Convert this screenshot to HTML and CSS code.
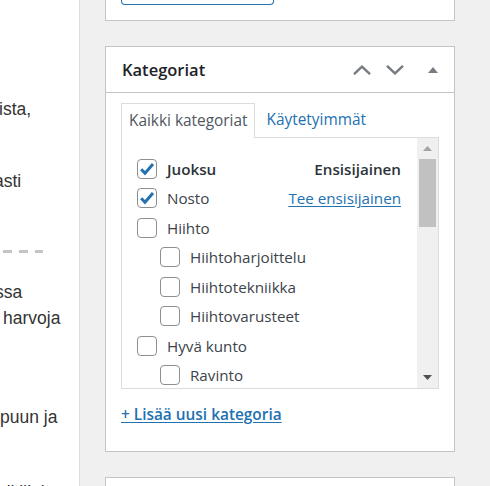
FILE: index.html
```html
<!DOCTYPE html>
<html lang="fi">
<head>
<meta charset="utf-8">
<title>Kategoriat</title>
<link rel="stylesheet" href="styles.css">
</head>
<body>
<div class="page">
  <div class="editor">
    <div class="ed-line l1"><span class="cut c1">ista,</span></div>
    <div class="ed-line l2"><span class="cut c2">asti</span></div>
    <div class="ed-sep"></div>
    <div class="ed-line l3"><span class="cut c3">ssa</span></div>
    <div class="ed-line"><span class="cut c4">harvoja</span></div>
    <div class="ed-line l5"><span class="cut c5">puun ja</span></div>
    <div class="ed-line l6"><span class="cut c6">oli illoi</span></div>
  </div>

  <div class="sidebar">
    <div class="postbox top-box"><div class="btn-outline"></div></div>

    <div class="postbox cat-box">
      <div class="pb-header">
        <h2 class="pb-title">Kategoriat</h2>
        <div class="pb-actions">
          <span class="handle">
            <svg width="18" height="10" viewBox="0 0 18 10"><polyline points="1,9.2 9,1.6 17,9.2" fill="none" stroke="#787c82" stroke-width="2.4"/></svg>
          </span>
          <span class="handle">
            <svg width="18" height="10" viewBox="0 0 18 10"><polyline points="1,0.8 9,8.4 17,0.8" fill="none" stroke="#787c82" stroke-width="2.4"/></svg>
          </span>
          <span class="handle toggle">
            <svg width="10" height="6" viewBox="0 0 10 6"><polygon points="0,6 5,0 10,6" fill="#787c82"/></svg>
          </span>
        </div>
      </div>

      <div class="pb-inside">
        <ul class="tabs">
          <li class="tab active">Kaikki kategoriat</li>
          <li class="tab">Käytetyimmät</li>
        </ul>
        <div class="tabs-panel">
          <ul class="checklist">
            <li>
              <div class="row">
                <span class="cb"><svg width="20" height="20" viewBox="0 0 20 20"><polyline points="4.2,10.2 8,14.2 16,5" fill="none" stroke="#2271b1" stroke-width="3"/></svg></span>
                <span class="name primary">Juoksu</span>
                <span class="prim-tag">Ensisijainen</span>
              </div>
            </li>
            <li>
              <div class="row">
                <span class="cb"><svg width="20" height="20" viewBox="0 0 20 20"><polyline points="4.2,10.2 8,14.2 16,5" fill="none" stroke="#2271b1" stroke-width="3"/></svg></span>
                <span class="name">Nosto</span>
                <span class="prim-link">Tee ensisijainen</span>
              </div>
            </li>
            <li>
              <div class="row"><span class="cb"></span><span class="name">Hiihto</span></div>
              <ul class="children">
                <li><div class="row"><span class="cb"></span><span class="name">Hiihtoharjoittelu</span></div></li>
                <li><div class="row"><span class="cb"></span><span class="name">Hiihtotekniikka</span></div></li>
                <li><div class="row"><span class="cb"></span><span class="name">Hiihtovarusteet</span></div></li>
              </ul>
            </li>
            <li>
              <div class="row"><span class="cb"></span><span class="name">Hyvä kunto</span></div>
              <ul class="children">
                <li><div class="row"><span class="cb"></span><span class="name">Ravinto</span></div></li>
                <li><div class="row"><span class="cb"></span><span class="name">Palautuminen</span></div></li>
              </ul>
            </li>
          </ul>
          <div class="scrollbar">
            <div class="sb-btn"><svg width="9" height="5" viewBox="0 0 9 5"><polygon points="0,5 4.5,0 9,5" fill="#a3a3a3"/></svg></div>
            <div class="sb-thumb"></div>
            <div class="sb-track"></div>
            <div class="sb-btn"><svg width="9" height="5" viewBox="0 0 9 5"><polygon points="0,0 4.5,5 9,0" fill="#505050"/></svg></div>
          </div>
        </div>
        <div class="add-row"><a class="add-new" href="#">+ Lisää uusi kategoria</a></div>
      </div>
    </div>

    <div class="postbox next-box"></div>
  </div>
</div>
</body>
</html>
```
FILE: styles.css
```css
* { box-sizing: border-box; }
html, body { margin: 0; padding: 0; }
body {
  background: #f0f0f1;
  font-family: "Open Sans", "Noto Sans", sans-serif;
  color: #3c434a;
}
.page {
  display: flex;
  height: 486px;
  overflow: hidden;
}

/* left editor column */
.editor {
  flex: none;
  width: 80px;
  background: #fff;
  border-right: 1px solid #dcdcde;
  overflow: hidden;
  font-family: "Liberation Sans", Arial, sans-serif;
  font-size: 17.5px;
  line-height: 26.25px;
  color: #333;
}
.ed-line { white-space: nowrap; height: 26.25px; }
.l1 { margin-top: 96px; }
.l2 { margin-top: 45.75px; }
.l3 { margin-top: 26px; }
.l5 { margin-top: 72.5px; }
.l6 { margin-top: 48.75px; }
.cut { display: inline-block; }
.c1 { margin-left: -1px; }
.c2 { margin-left: -6px; }
.c3 { margin-left: -5px; }
.c4 { margin-left: 3px; }
.c5 { margin-left: 0; }
.c6 { margin-left: -3px; }
.ed-sep {
  margin-top: 55.75px;
  margin-left: 3px;
  width: 40px;
  height: 3px;
  background: repeating-linear-gradient(90deg, #c3c4c7 0 9px, transparent 9px 16px);
}

/* sidebar */
.sidebar {
  flex: none;
  width: 350px;
  margin-left: 25px;
}
.postbox {
  background: #fff;
  border: 1px solid #c3c4c7;
}
.top-box {
  border-top: none;
  height: 21px;
  padding-left: 15px;
}
.btn-outline {
  width: 153px;
  height: 5px;
  border: 1px solid #2271b1;
  border-top: none;
  border-radius: 0 0 4px 4px;
}
.cat-box {
  margin-top: 25px;
}
.pb-header {
  display: flex;
  align-items: center;
  height: 46px;
  border-bottom: 1px solid #c3c4c7;
  padding-left: 16px;
}
.pb-title {
  margin: 0;
  flex: 1;
  font-size: 16.5px;
  font-weight: 600;
  color: #1d2327;
  line-height: 1.4;
}
.pb-actions {
  display: flex;
  height: 100%;
}
.handle {
  width: 33px;
  display: flex;
  align-items: center;
  justify-content: center;
}
.handle.toggle { width: 43px; }

.pb-inside {
  padding: 10px 15px 25px 15px;
}
.tabs {
  list-style: none;
  margin: 0;
  padding: 0;
  display: flex;
  align-items: flex-start;
  height: 34px;
}
.tab {
  height: 35px;
  line-height: 33px;
  padding: 0 12px 0 12px;
  font-size: 15.4px;
  color: #2271b1;
}
.tab.active {
  position: relative;
  z-index: 1;
  background: #fff;
  border: 1px solid #dcdcde;
  border-bottom: none;
  padding: 0 6px 0 7px;
  color: #50575e;
}

.tabs-panel {
  display: flex;
  height: 252px;
  border: 1px solid #dcdcde;
}
.checklist {
  flex: 1;
  list-style: none;
  margin: 0;
  padding: 16px 16px 0 15px;
  overflow: hidden;
}
.checklist ul {
  list-style: none;
  margin: 0;
  padding: 0;
}
.children { margin-left: 23px !important; }
.row {
  display: flex;
  align-items: center;
  height: 29.5px;
  font-size: 15.2px;
  white-space: nowrap;
}
.cb {
  flex: none;
  width: 20px;
  height: 20px;
  border: 1px solid #8c8f94;
  border-radius: 4px;
  background: #fff;
  margin-right: 10px;
  position: relative;
}
.cb svg {
  position: absolute;
  left: -1px;
  top: -1px;
}
.name { color: #3c434a; }
.name.primary { font-weight: 600; color: #2c3338; }
.prim-tag {
  margin-left: auto;
  font-weight: 600;
  color: #2c3338;
}
.prim-link {
  margin-left: auto;
  color: #2271b1;
  text-decoration: underline;
  text-underline-offset: 2px;
}

.scrollbar {
  flex: none;
  width: 21px;
  background: #f0f0f0;
  display: flex;
  flex-direction: column;
}
.sb-btn {
  height: 21px;
  display: flex;
  align-items: center;
  justify-content: center;
}
.sb-thumb {
  height: 68px;
  margin: 0 2px;
  background: #c1c1c1;
}
.sb-track { flex: 1; }

.add-row {
  margin-top: 14px;
  line-height: 22px;
}
.add-new {
  font-size: 15.4px;
  font-weight: 600;
  color: #2271b1;
  text-decoration: underline;
  text-underline-offset: 2px;
}

.next-box {
  margin-top: 25px;
  height: 60px;
}
```
